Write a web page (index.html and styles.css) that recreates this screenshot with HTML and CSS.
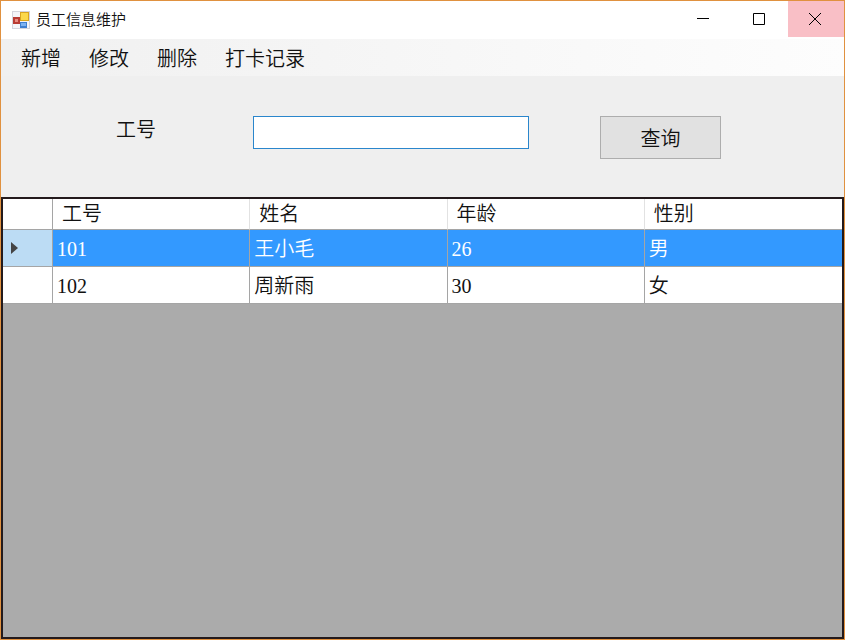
FILE: index.html
```html
<!DOCTYPE html>
<html lang="zh-CN">

<head>
    <meta charset="UTF-8">
    <title>员工信息维护</title>
    <meta name="viewport" content="width=device-width, initial-scale=1.0">
    <link rel="stylesheet" href="styles.css">
</head>

<body>

    <div class="window">
        <header class="title-bar">
            <svg class="app-icon" viewBox="0 0 18 18" aria-hidden="true">
                <rect x="0.5" y="0.5" width="17" height="17" fill="#f4f4f8" stroke="#d4d4dc"/>
                <rect x="1" y="6" width="7" height="7" fill="#b83a32"/>
                <rect x="3" y="8" width="3" height="3" fill="#e88a80"/>
                <rect x="8" y="1" width="9" height="9" fill="#d9a520"/>
                <rect x="9" y="2" width="7" height="7" fill="#fbd84a"/>
                <rect x="8" y="11" width="7" height="6" fill="#3f7fd0"/>
                <rect x="9" y="12" width="5" height="3" fill="#7db2f0"/>
            </svg>
            <h1 class="title">员工信息维护</h1>
            <div class="window-buttons">
                <button type="button" aria-label="最小化">
                    <svg viewBox="0 0 12 12"><path d="M0 5.5h12"/></svg>
                </button>
                <button type="button" aria-label="最大化">
                    <svg viewBox="0 0 12 12"><path d="M0.5 0.5h11v11h-11z"/></svg>
                </button>
                <button type="button" class="close" aria-label="关闭">
                    <svg viewBox="0 0 12 12"><path d="M0 0l12 12M12 0L0 12"/></svg>
                </button>
            </div>
        </header>

        <nav class="menu">
            <button type="button">新增</button>
            <button type="button">修改</button>
            <button type="button">删除</button>
            <button type="button">打卡记录</button>
        </nav>

        <form class="search" onsubmit="return false">
            <label for="empNo">工号</label>
            <input type="text" id="empNo">
            <button type="submit">查询</button>
        </form>

        <main class="grid-panel">
            <table class="grid">
                <thead>
                    <tr>
                        <th class="row-head"></th>
                        <th>工号</th>
                        <th>姓名</th>
                        <th>年龄</th>
                        <th>性别</th>
                    </tr>
                </thead>
                <tbody>
                    <tr class="selected">
                        <th class="row-head">
                            <svg class="arrow" viewBox="0 0 7 12" aria-hidden="true"><path d="M0 0l7 6l-7 6z"/></svg>
                        </th>
                        <td>101</td>
                        <td>王小毛</td>
                        <td>26</td>
                        <td>男</td>
                    </tr>
                    <tr>
                        <th class="row-head"></th>
                        <td>102</td>
                        <td>周新雨</td>
                        <td>30</td>
                        <td>女</td>
                    </tr>
                </tbody>
            </table>
        </main>
    </div>

</body>
</html>
```

FILE: styles.css
```css
* {
    box-sizing: border-box;
    margin: 0;
    padding: 0;
}

body {
    font-family: "Liberation Serif", "Noto Sans CJK SC", serif;
    font-size: 20px;
    font-weight: 350;
    color: #111;
}

button, input {
    font: inherit;
    color: inherit;
}

.window {
    display: flex;
    flex-direction: column;
    min-height: 100vh;
    border: 1px solid #e0913f;
    background: #efefef;
}

/* title bar */
.title-bar {
    display: flex;
    align-items: center;
    height: 38px;
    padding-left: 11px;
    background: #fff;
}

.app-icon {
    width: 18px;
    height: 18px;
}

.title {
    flex: 1;
    margin-left: 6px;
    font-family: "Noto Sans CJK SC", sans-serif;
    font-size: 15px;
    font-weight: 350;
    line-height: 20px;
    padding-bottom: 2px;
}

.window-buttons {
    display: flex;
    align-self: flex-start;
}

.window-buttons button {
    display: flex;
    align-items: center;
    justify-content: center;
    width: 56px;
    height: 36px;
    padding-right: 2px;
    border: none;
    background: none;
}

.window-buttons svg {
    width: 12px;
    height: 12px;
    fill: none;
    stroke: #000;
}

.window-buttons .close {
    background: #f9bfc6;
}

/* menu */
.menu {
    display: flex;
    gap: 28px;
    height: 37px;
    padding-left: 20px;
    background: linear-gradient(to right, #f0f0f0, #fdfdfd);
}

.menu button {
    border: none;
    background: none;
    font-family: "Noto Sans CJK SC", sans-serif;
    line-height: 36px;
}

/* search */
.search {
    display: grid;
    grid-template-columns: 137fr 276fr 71fr 121fr;
    align-items: start;
    height: 121px;
    padding: 40px 123px 0 115px;
}

.search label {
    line-height: 28px;
}

.search input {
    height: 33px;
    min-width: 0;
    padding: 0 4px;
    border: 1px solid #2a86cc;
    background: #fff;
    outline: none;
}

.search button {
    grid-column: 4;
    height: 43px;
    border: 1px solid #adadad;
    background: #e1e1e1;
}

/* data grid */
.grid-panel {
    flex: 1;
    border: 2px solid #231a1c;
    background: #ababab;
}

.grid {
    width: 100%;
    table-layout: fixed;
    border-collapse: separate;
    border-spacing: 0;
    background: #fff;
    line-height: 28px;
}

.grid th,
.grid td {
    font-weight: 350;
    text-align: left;
    border-right: 1px solid #a5a5a5;
    border-bottom: 1px solid #a5a5a5;
}

.grid thead th {
    height: 31px;
    padding-left: 9px;
    border-right-color: #e2e2e2;
}

.grid td {
    height: 37px;
    padding: 2px 0 0 4px;
}

.grid .row-head {
    width: 50px;
    padding-left: 8px;
    border-right-color: #a5a5a5;
}

.grid tr > :last-child {
    border-right: none;
}

.grid .selected td {
    background: #3399ff;
    color: #fff;
}

.grid .selected .row-head {
    background: #bcdcf4;
}

.arrow {
    display: block;
    width: 7px;
    height: 12px;
    fill: #444;
}
```
